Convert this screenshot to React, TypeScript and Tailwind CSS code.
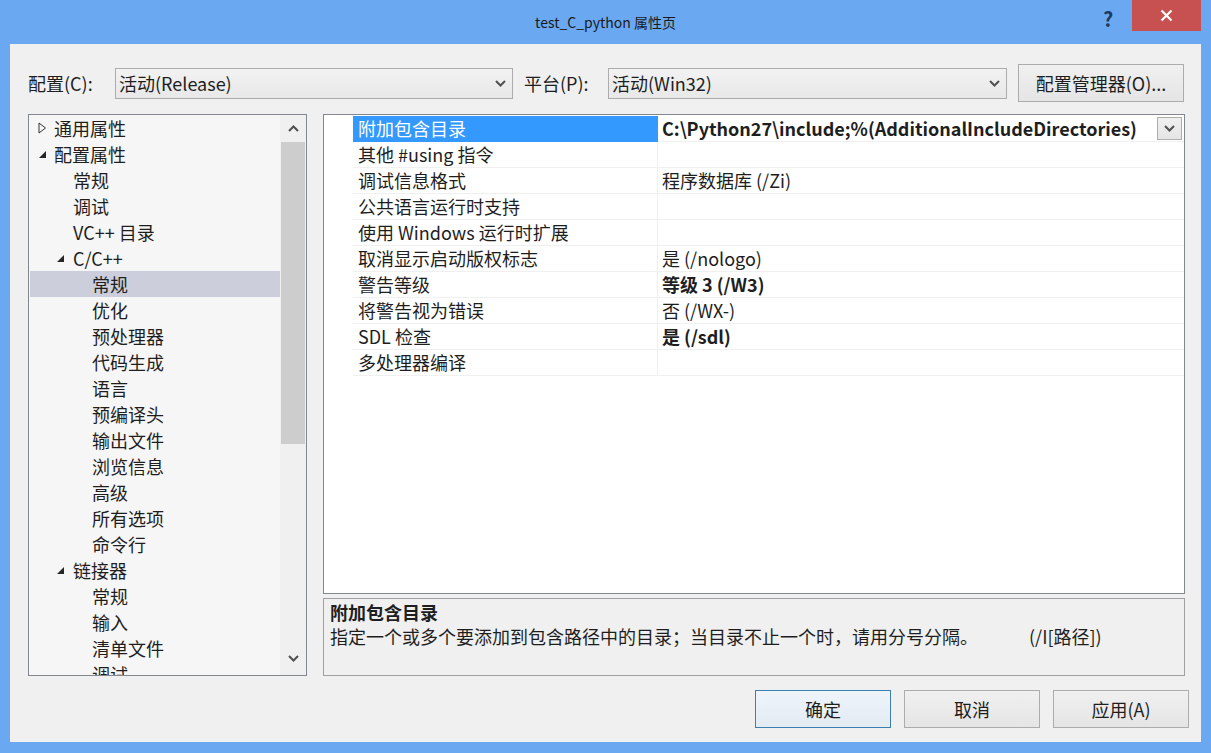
import React from "react";

const treeItems: { text: string; level: number; arrow?: "open" | "closed"; selected?: boolean }[] = [
  { text: "通用属性", level: 0, arrow: "closed" },
  { text: "配置属性", level: 0, arrow: "open" },
  { text: "常规", level: 1 },
  { text: "调试", level: 1 },
  { text: "VC++ 目录", level: 1 },
  { text: "C/C++", level: 1, arrow: "open" },
  { text: "常规", level: 2, selected: true },
  { text: "优化", level: 2 },
  { text: "预处理器", level: 2 },
  { text: "代码生成", level: 2 },
  { text: "语言", level: 2 },
  { text: "预编译头", level: 2 },
  { text: "输出文件", level: 2 },
  { text: "浏览信息", level: 2 },
  { text: "高级", level: 2 },
  { text: "所有选项", level: 2 },
  { text: "命令行", level: 2 },
  { text: "链接器", level: 1, arrow: "open" },
  { text: "常规", level: 2 },
  { text: "输入", level: 2 },
  { text: "清单文件", level: 2 },
  { text: "调试", level: 2 },
];

const props: { name: string; value: string; bold?: boolean }[] = [
  { name: "附加包含目录", value: "C:\\Python27\\include;%(AdditionalIncludeDirectories)", bold: true },
  { name: "其他 #using 指令", value: "" },
  { name: "调试信息格式", value: "程序数据库 (/Zi)" },
  { name: "公共语言运行时支持", value: "" },
  { name: "使用 Windows 运行时扩展", value: "" },
  { name: "取消显示启动版权标志", value: "是 (/nologo)" },
  { name: "警告等级", value: "等级 3 (/W3)", bold: true },
  { name: "将警告视为错误", value: "否 (/WX-)" },
  { name: "SDL 检查", value: "是 (/sdl)", bold: true },
  { name: "多处理器编译", value: "" },
];

const Chevron = ({ up }: { up?: boolean }) => (
  <svg width="11" height="7" viewBox="0 0 11 7" className={up ? "rotate-180" : ""}>
    <polyline points="1,1 5.5,5.5 10,1" fill="none" stroke="#505050" strokeWidth="2" />
  </svg>
);

const Combo = ({ text, width }: { text: string; width: string }) => (
  <div
    className={`${width} h-[31px] border border-[#acacac] bg-gradient-to-b from-[#f2f2f2] to-[#e8e8e8] flex items-center pl-[3px] pr-[6px]`}
  >
    <span className="flex-1 text-[18px] text-[#1e1e1e]">{text}</span>
    <Chevron />
  </div>
);

const TreeArrow = ({ kind }: { kind: "open" | "closed" }) =>
  kind === "closed" ? (
    <svg width="9" height="12" viewBox="0 0 9 12">
      <polygon points="1,1 7.5,6 1,11" fill="none" stroke="#333" strokeWidth="1" />
    </svg>
  ) : (
    <svg width="9" height="12" viewBox="0 0 9 12">
      <polygon points="8,3 8,10 1,10" fill="#262626" />
    </svg>
  );

const Button = ({ text, primary }: { text: string; primary?: boolean }) => (
  <button
    className={`w-[136px] h-[38px] border ${
      primary ? "border-[#3c7fb1] from-[#eef4fa] to-[#e3ebf3]" : "border-[#acacac] from-[#f0f0f0] to-[#e5e5e5]"
    } bg-gradient-to-b text-[18px] text-[#1e1e1e] flex items-center justify-center`}
  >
    {text}
  </button>
);

export default function App() {
  return (
    <div className="w-[1211px] h-[753px] bg-[#6aa9f1] flex flex-col font-['Noto_Sans_CJK_SC','Noto_Sans',sans-serif] overflow-hidden">
      {/* title bar */}
      <div className="h-[44px] relative flex items-start justify-center">
        <span className="mt-[12px] text-[14px] text-[#1a1a1a]">test_C_python 属性页</span>
        <span className="absolute left-[1103px] top-[4px] text-[20px] font-bold text-[#1d3a5f]">?</span>
        <div className="absolute left-[1132px] top-0 w-[69px] h-[31px] bg-[#c75050] flex items-center justify-center">
          <svg width="13" height="13" viewBox="0 0 13 13">
            <path d="M1.5 1.5 L11.5 11.5 M11.5 1.5 L1.5 11.5" stroke="#fff" strokeWidth="2.2" />
          </svg>
        </div>
      </div>

      {/* client area */}
      <div className="mx-[10px] w-[1191px] h-[698px] bg-[#f0f0f0] flex flex-col pl-[18px]">
        {/* config row */}
        <div className="mt-[20px] h-[38px] flex items-center text-[18px] text-[#1e1e1e]">
          <span className="w-[87px]">配置(C):</span>
          <Combo text="活动(Release)" width="w-[398px]" />
          <span className="ml-[11px] w-[84px]">平台(P):</span>
          <Combo text="活动(Win32)" width="w-[399px]" />
          <div className="ml-[11px] w-[166px] h-[38px] border border-[#acacac] bg-gradient-to-b from-[#f0f0f0] to-[#e5e5e5] flex items-center justify-center">
            配置管理器(O)...
          </div>
        </div>

        {/* main area */}
        <div className="mt-[12px] flex">
          {/* tree */}
          <div className="w-[279px] h-[562px] border border-[#828790] bg-[#f6f6f6] flex overflow-hidden">
            <div className="flex-1 pl-[1px] overflow-hidden">
              {treeItems.map((item, i) => (
                <div
                  key={i}
                  className={`h-[26px] flex items-center text-[18px] text-[#1e1e1e] ${
                    item.selected ? "bg-[#cccedb]" : ""
                  }`}
                >
                  <div
                    className={`${
                      item.level === 0 ? "w-[24px] pl-[8px]" : item.level === 1 ? "w-[43px] pl-[26px]" : "w-[62px]"
                    } flex items-center`}
                  >
                    {item.arrow && <TreeArrow kind={item.arrow} />}
                  </div>
                  <span>{item.text}</span>
                </div>
              ))}
            </div>
            <div className="w-[26px] flex flex-col items-center bg-[#f0f0f0]">
              <div className="h-[27px] flex items-center">
                <Chevron up />
              </div>
              <div className="w-[24px] h-[302px] bg-[#cdcdcd]" />
              <div className="flex-1" />
              <div className="h-[27px] flex items-center mb-[3px]">
                <Chevron />
              </div>
            </div>
          </div>

          {/* grid + description */}
          <div className="ml-[16px] w-[862px] flex flex-col">
            <div className="h-[480px] border border-[#828790] bg-white pt-[1px]">
              {props.map((p, i) => (
                <div key={i} className="h-[26px] flex text-[18px] text-[#1e1e1e]">
                  <div className="w-[29px]" />
                  <div
                    className={`w-[305px] pl-[5px] flex items-center border-b border-r ${
                      i === 0 ? "bg-[#3399ff] text-white border-[#3399ff]" : "border-[#f0f0f0]"
                    }`}
                  >
                    {p.name}
                  </div>
                  <div className="flex-1 flex items-center pl-[4px] pr-[2px] border-b border-[#f0f0f0]">
                    <span className={`flex-1 whitespace-nowrap ${p.bold ? "font-bold" : ""}`}>{p.value}</span>
                    {i === 0 && (
                      <div className="w-[25px] h-[23px] border border-[#acacac] bg-gradient-to-b from-[#f0f0f0] to-[#e5e5e5] flex items-center justify-center">
                        <Chevron />
                      </div>
                    )}
                  </div>
                </div>
              ))}
            </div>
            <div className="mt-[4px] h-[78px] border border-[#a0a0a0] bg-[#f0f0f0] pl-[6px] pt-[1px] text-[18px] leading-[24px] text-[#1e1e1e]">
              <div className="font-bold">附加包含目录</div>
              <div className="flex">
                <span className="w-[699px]">指定一个或多个要添加到包含路径中的目录；当目录不止一个时，请用分号分隔。</span>
                <span>(/I[路径])</span>
              </div>
            </div>
          </div>
        </div>

        {/* buttons */}
        <div className="mt-[14px] flex justify-end gap-[13px] pr-[12px]">
          <Button text="确定" primary />
          <Button text="取消" />
          <Button text="应用(A)" />
        </div>
      </div>
    </div>
  );
}
